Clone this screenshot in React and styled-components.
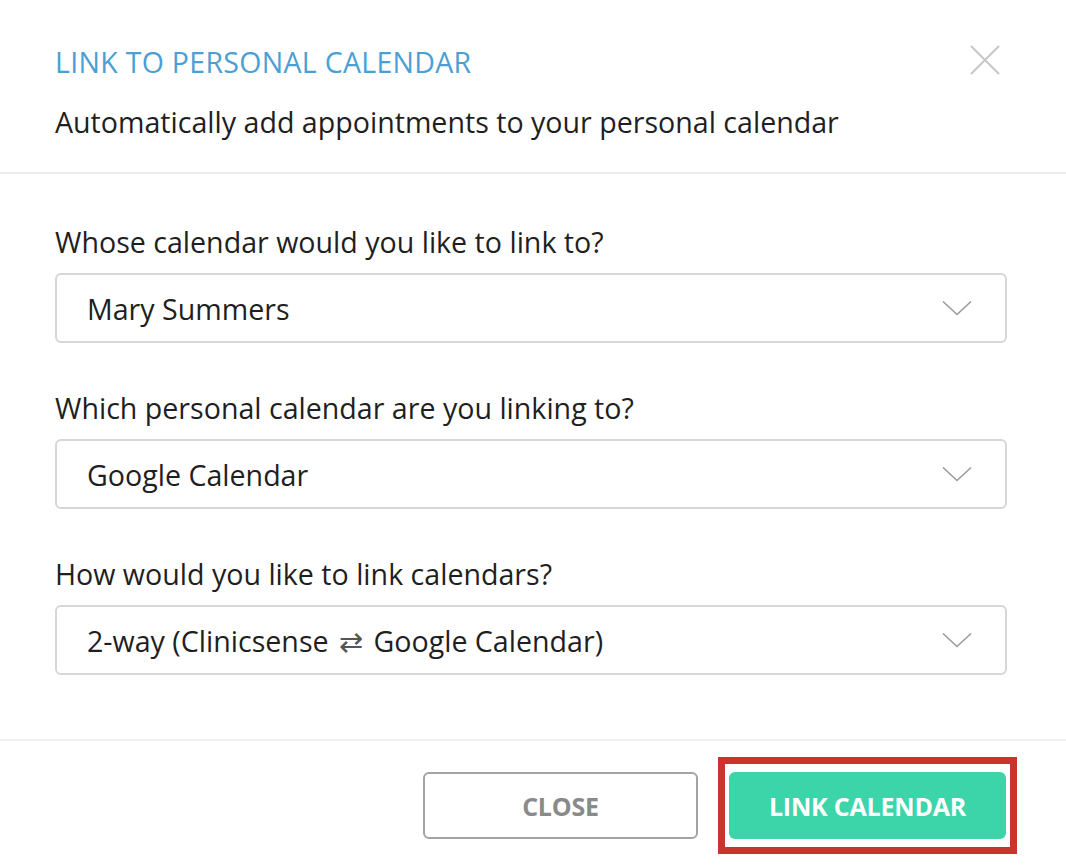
import React from "react";
import styled, { createGlobalStyle } from "styled-components";

const GlobalStyle = createGlobalStyle`
  body {
    margin: 0;
    background: #ffffff;
    font-family: "Open Sans", "Liberation Sans", sans-serif;
  }
`;

const Dialog = styled.div`
  width: 1066px;
  background: #ffffff;
  color: #1f1f1f;
`;

const Header = styled.div`
  position: relative;
  padding: 44px 55px 32px;
  border-bottom: 2px solid #ededed;
`;

const Title = styled.h2`
  margin: 0;
  font-size: 28.5px;
  line-height: 36px;
  font-weight: 400;
  letter-spacing: 0.3px;
  color: #4b9fd3;
`;

const Subtitle = styled.p`
  margin: 24px 0 0;
  font-size: 28.6px;
  line-height: 36px;
  color: #1f1f1f;
`;

const CloseX = styled.button`
  position: absolute;
  top: 45px;
  right: 66px;
  width: 30px;
  height: 30px;
  padding: 0;
  border: none;
  background: none;
  cursor: pointer;
`;

const Body = styled.div`
  padding: 50px 59px 64px 55px;
  border-bottom: 2px solid #f0f0f0;
`;

const Field = styled.div`
  & + & {
    margin-top: 47px;
  }
`;

const Label = styled.label`
  display: block;
  font-size: 28.6px;
  line-height: 36px;
  margin-bottom: 13px;
  color: #1f1f1f;
`;

const Select = styled.div`
  box-sizing: border-box;
  height: 70px;
  display: flex;
  align-items: center;
  justify-content: space-between;
  padding: 0 33px 0 30px;
  border: 2px solid #d6d6d6;
  border-radius: 6px;
  font-size: 28.6px;
  color: #1f1f1f;
`;

const Arrows = styled.span`
  color: #555555;
  margin: 0 3px;
`;

const Footer = styled.div`
  display: flex;
  justify-content: flex-end;
  align-items: center;
  gap: 20px;
  padding: 16px 49px 11px 0;
`;

const Button = styled.button`
  box-sizing: border-box;
  width: ${(p) => (p.$primary ? "277px" : "275px")};
  height: 67px;
  border-radius: 6px;
  font-family: "Open Sans", "Liberation Sans", sans-serif;
  font-size: 25px;
  font-weight: 700;
  letter-spacing: -0.2px;
  cursor: pointer;
  border: ${(p) => (p.$primary ? "none" : "2px solid #a3a3a3")};
  background: ${(p) => (p.$primary ? "#3cd5aa" : "#ffffff")};
  color: ${(p) => (p.$primary ? "#ffffff" : "#8a8a8a")};
`;

const Highlight = styled.div`
  border: 7px solid #c9352c;
  padding: 8px 4px;
`;

const Chevron = () => (
  <svg width="30" height="16" viewBox="0 0 30 16" fill="none">
    <path d="M1 1.5 L15 14.5 L29 1.5" stroke="#9b9b9b" strokeWidth="1.6" />
  </svg>
);

const Dropdown = ({ label, children }) => (
  <Field>
    <Label>{label}</Label>
    <Select>
      <span>{children}</span>
      <Chevron />
    </Select>
  </Field>
);

const App = () => {
  return (
    <Dialog>
      <GlobalStyle />
      <Header>
        <Title>LINK TO PERSONAL CALENDAR</Title>
        <Subtitle>Automatically add appointments to your personal calendar</Subtitle>
        <CloseX aria-label="Close">
          <svg width="30" height="30" viewBox="0 0 30 30">
            <path d="M1 1 L29 29 M29 1 L1 29" stroke="#c6c6c6" strokeWidth="2" />
          </svg>
        </CloseX>
      </Header>
      <Body>
        <Dropdown label="Whose calendar would you like to link to?">Mary Summers</Dropdown>
        <Dropdown label="Which personal calendar are you linking to?">Google Calendar</Dropdown>
        <Dropdown label="How would you like to link calendars?">
          2-way (Clinicsense <Arrows>⇄</Arrows> Google Calendar)
        </Dropdown>
      </Body>
      <Footer>
        <Button>CLOSE</Button>
        <Highlight>
          <Button $primary>LINK CALENDAR</Button>
        </Highlight>
      </Footer>
    </Dialog>
  );
};

export default App;
